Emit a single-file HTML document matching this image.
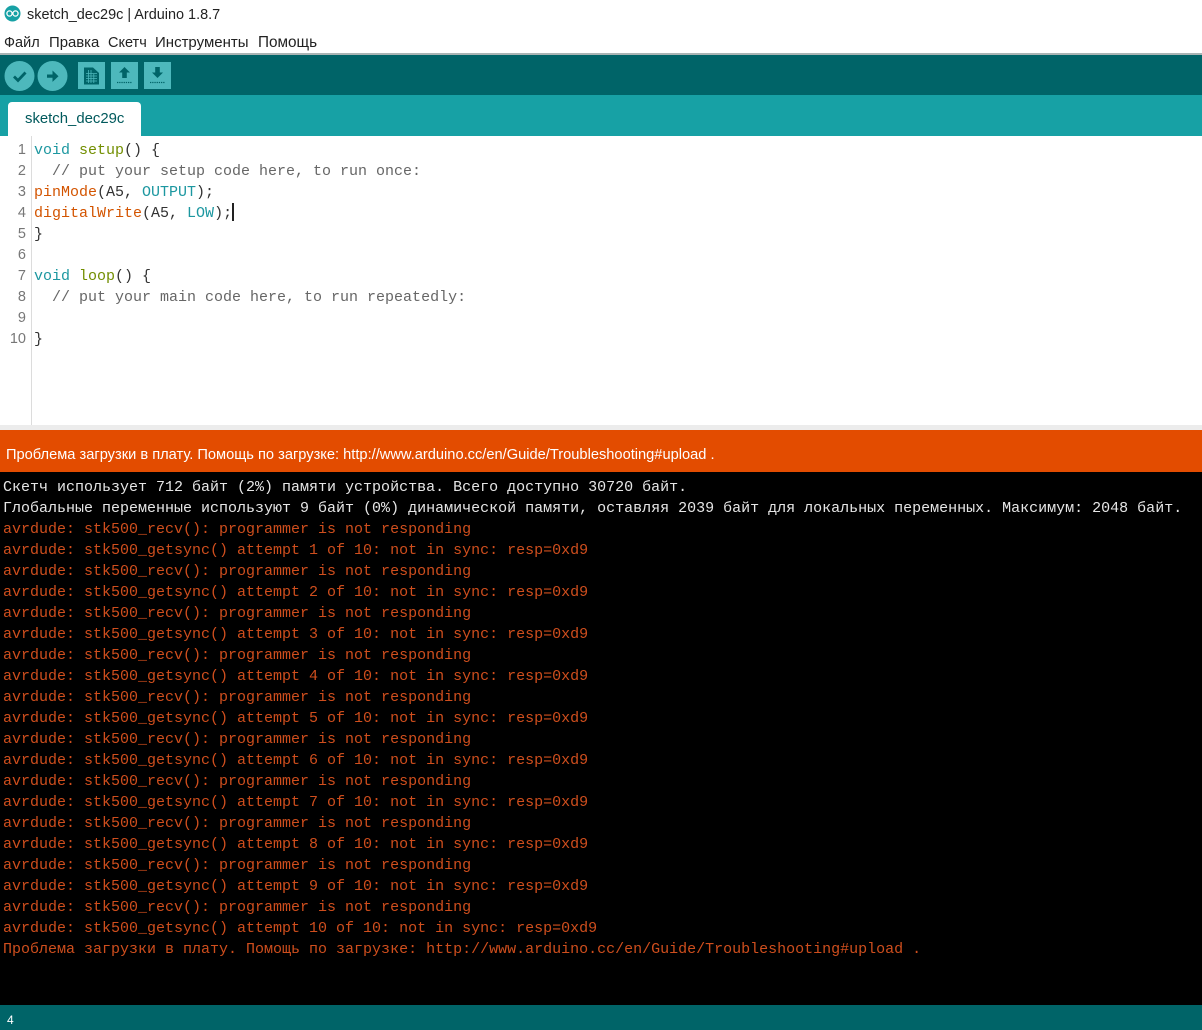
<!DOCTYPE html>
<html><head><meta charset="utf-8"><style>
html,body{margin:0;padding:0;background:#fff}
#r{position:relative;width:1202px;height:1030px;overflow:hidden;background:#fff;font-family:"Liberation Sans",sans-serif}
.a{position:absolute}
.t{position:absolute;white-space:pre;line-height:20px;color:#222}
.m{position:absolute;white-space:pre;font-family:"Liberation Mono",monospace;font-size:15px;line-height:21px;height:21px}
.e{left:34px;color:#333}
.n{position:absolute;width:26px;text-align:right;left:0;font-family:"Liberation Sans",sans-serif;font-size:14.5px;line-height:21px;color:#777}
.c{left:3px;color:#cf4e1d}
.w{color:#e6e6e6}
.k{color:#1c97a0}.f{color:#d35400}.y{color:#728e00}.g{color:#666}
</style></head><body><div id="r">
<svg class="a" style="left:4px;top:5px" width="17" height="17" viewBox="0 0 17 17"><circle cx="8.500" cy="8.500" r="8" fill="#17a1a5"/><circle cx="5.500" cy="8.500" r="2.600" fill="none" stroke="#fff" stroke-width="1.300"/><circle cx="11.500" cy="8.500" r="2.600" fill="none" stroke="#fff" stroke-width="1.300"/></svg>
<div class="t" style="left:27px;top:5px;font-size:14.45px">sketch_dec29c | Arduino 1.8.7</div>
<div class="t" style="left:4px;top:33px;font-size:14.5px">Файл</div>
<div class="t" style="left:49px;top:33px;font-size:14.9px">Правка</div>
<div class="t" style="left:108px;top:33px;font-size:14.5px">Скетч</div>
<div class="t" style="left:155px;top:33px;font-size:15px">Инструменты</div>
<div class="t" style="left:258px;top:33px;font-size:15.3px">Помощь</div>
<div class="a" style="left:0;top:53px;width:1202px;height:2px;background:#a9b4b4"></div>
<div class="a" style="left:0;top:55px;width:1202px;height:40px;background:#006468"></div>
<svg class="a" style="left:0;top:55px" width="180" height="40" viewBox="0 0 180 40">
<circle cx="19.500" cy="21" r="15" fill="#4db8bc"/><circle cx="52.500" cy="21" r="15" fill="#4db8bc"/>
<path d="M14 21.500l4 4 7.500-8" fill="none" stroke="#006468" stroke-width="2.800"/>
<path d="M47 19.500h5.500v-4l6 5.700-6 5.700v-4.200H47z" fill="#006468"/>
<rect x="78" y="7" width="27" height="27" fill="#4db8bc"/><rect x="111" y="7" width="27" height="27" fill="#4db8bc"/><rect x="144" y="7" width="27" height="27" fill="#4db8bc"/>
<path d="M84 12.500h9l6 5.500v11.500H84z" fill="#006468"/>
<path d="M86 18.500h11M86 21h11M86 23.500h11M86 26h11M88.500 15v13M91 15v13M93.800 19v9" stroke="#4db8bc" stroke-width=".8"/>
<path d="M124.500 12l5.500 5.500h-3.200v5.500h-4.600v-5.500H119z" fill="#006468"/>
<path d="M117 27.500h15" stroke="#006468" stroke-width="1.300" stroke-dasharray="1.300 .9"/>
<path d="M155.200 12h4.600v5.500h3.200l-5.500 5.500-5.500-5.500h3.200z" fill="#006468"/>
<path d="M150 27.500h15" stroke="#006468" stroke-width="1.300" stroke-dasharray="1.300 .9"/>
</svg>
<div class="a" style="left:0;top:95px;width:1202px;height:41px;background:#17a1a5"></div>
<div class="a" style="left:8px;top:102px;width:133px;height:34px;background:#fff;border-radius:4px 4px 0 0"></div>
<div class="t" style="left:25px;top:109px;font-size:14.9px;color:#00595c">sketch_dec29c</div>
<div class="a" style="left:31px;top:136px;width:1px;height:289px;background:#dcdcdc"></div>
<div class="n" style="top:140px">1</div><div class="n" style="top:161px">2</div><div class="n" style="top:182px">3</div><div class="n" style="top:203px">4</div><div class="n" style="top:224px">5</div><div class="n" style="top:245px">6</div><div class="n" style="top:266px">7</div><div class="n" style="top:287px">8</div><div class="n" style="top:308px">9</div><div class="n" style="top:329px">10</div>
<div class="m e" style="top:140px"><span class="k">void</span> <span class="y">setup</span>() {</div>
<div class="m e" style="top:161px;color:#666">  // put your setup code here, to run once:</div>
<div class="m e" style="top:182px"><span class="f">pinMode</span>(A5, <span class="k">OUTPUT</span>);</div>
<div class="m e" style="top:203px"><span class="f">digitalWrite</span>(A5, <span class="k">LOW</span>);</div>
<div class="a" style="left:232px;top:203px;width:2px;height:18px;background:#222"></div>
<div class="m e" style="top:224px">}</div>
<div class="m e" style="top:266px"><span class="k">void</span> <span class="y">loop</span>() {</div>
<div class="m e" style="top:287px;color:#666">  // put your main code here, to run repeatedly:</div>
<div class="m e" style="top:329px">}</div>
<div class="a" style="left:0;top:425px;width:1202px;height:5px;background:#ececec"></div>
<div class="a" style="left:0;top:430px;width:1202px;height:42px;background:#e34c00"></div>
<div class="t" style="left:6px;top:445px;font-size:14.65px;color:#fff">Проблема загрузки в плату. Помощь по загрузке: http://www.arduino.cc/en/Guide/Troubleshooting#upload .</div>
<div class="a" style="left:0;top:472px;width:1202px;height:533px;background:#000"></div>
<div class="m c w" style="top:477px">Скетч использует 712 байт (2%) памяти устройства. Всего доступно 30720 байт.</div>
<div class="m c w" style="top:498px">Глобальные переменные используют 9 байт (0%) динамической памяти, оставляя 2039 байт для локальных переменных. Максимум: 2048 байт.</div>
<div class="m c" style="top:519px">avrdude: stk500_recv(): programmer is not responding</div>
<div class="m c" style="top:540px">avrdude: stk500_getsync() attempt 1 of 10: not in sync: resp=0xd9</div>
<div class="m c" style="top:561px">avrdude: stk500_recv(): programmer is not responding</div>
<div class="m c" style="top:582px">avrdude: stk500_getsync() attempt 2 of 10: not in sync: resp=0xd9</div>
<div class="m c" style="top:603px">avrdude: stk500_recv(): programmer is not responding</div>
<div class="m c" style="top:624px">avrdude: stk500_getsync() attempt 3 of 10: not in sync: resp=0xd9</div>
<div class="m c" style="top:645px">avrdude: stk500_recv(): programmer is not responding</div>
<div class="m c" style="top:666px">avrdude: stk500_getsync() attempt 4 of 10: not in sync: resp=0xd9</div>
<div class="m c" style="top:687px">avrdude: stk500_recv(): programmer is not responding</div>
<div class="m c" style="top:708px">avrdude: stk500_getsync() attempt 5 of 10: not in sync: resp=0xd9</div>
<div class="m c" style="top:729px">avrdude: stk500_recv(): programmer is not responding</div>
<div class="m c" style="top:750px">avrdude: stk500_getsync() attempt 6 of 10: not in sync: resp=0xd9</div>
<div class="m c" style="top:771px">avrdude: stk500_recv(): programmer is not responding</div>
<div class="m c" style="top:792px">avrdude: stk500_getsync() attempt 7 of 10: not in sync: resp=0xd9</div>
<div class="m c" style="top:813px">avrdude: stk500_recv(): programmer is not responding</div>
<div class="m c" style="top:834px">avrdude: stk500_getsync() attempt 8 of 10: not in sync: resp=0xd9</div>
<div class="m c" style="top:855px">avrdude: stk500_recv(): programmer is not responding</div>
<div class="m c" style="top:876px">avrdude: stk500_getsync() attempt 9 of 10: not in sync: resp=0xd9</div>
<div class="m c" style="top:897px">avrdude: stk500_recv(): programmer is not responding</div>
<div class="m c" style="top:918px">avrdude: stk500_getsync() attempt 10 of 10: not in sync: resp=0xd9</div>
<div class="m c" style="top:939px">Проблема загрузки в плату. Помощь по загрузке: http://www.arduino.cc/en/Guide/Troubleshooting#upload .</div>
<div class="a" style="left:0;top:1005px;width:1202px;height:25px;background:#006468"></div>
<div class="t" style="left:7px;top:1010px;font-size:12px;color:#fff">4</div>
</div></body></html>
